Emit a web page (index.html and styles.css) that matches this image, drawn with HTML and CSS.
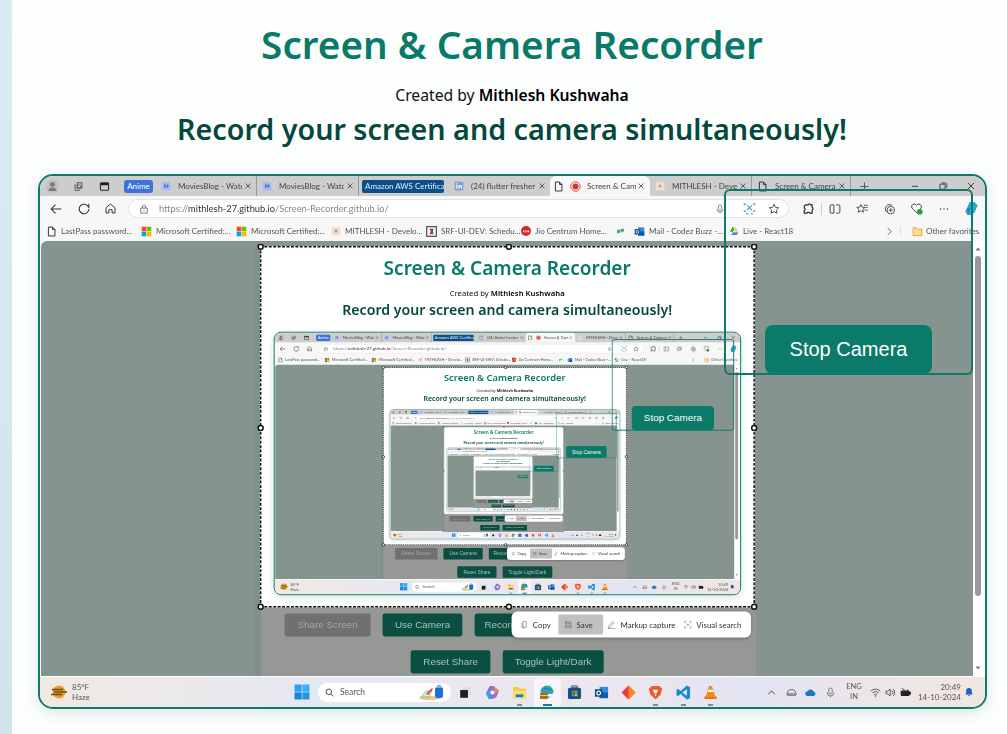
FILE: index.html
```html
<!DOCTYPE html>
<html lang="en">
<head>
<meta charset="utf-8">
<title>Screen &amp; Camera Recorder</title>
<link rel="stylesheet" href="styles.css">
</head>
<body>
<svg class="sprite" aria-hidden="true">
  <symbol id="person" viewBox="0 0 16 16"><circle cx="8" cy="8" r="8" fill="#c2c0bd"/><circle cx="8" cy="5.6" r="3" fill="#7d7b78"/><path d="M2.8 13.5c.4-3 2.4-4.2 5.2-4.2s4.800 1.200 5.200 4.200z" fill="#7d7b78"/></symbol>
  <symbol id="spaces" viewBox="0 0 16 16"><path d="M6 2.500h7v8H6zM3 5v8.500h7" fill="none" stroke="#444" stroke-width="1.300"/><circle cx="9" cy="8" r="2.400" fill="none" stroke="#444"/></symbol>
  <symbol id="tabs" viewBox="0 0 16 16"><rect x="2" y="2.500" width="12" height="11" rx="1.500" fill="none" stroke="#222" stroke-width="1.500"/><path d="M2 3h12v3H2z" fill="#222"/></symbol>
  <symbol id="play" viewBox="0 0 16 16"><rect x="1" y="1" width="14" height="14" rx="2" fill="#a9bde9"/><path d="M5 4l4 4-4 4zM9 4l4 4-4 4z" fill="#4c78cf"/></symbol>
  <symbol id="x" viewBox="0 0 16 16"><path d="M3 3l10 10M13 3L3 13" stroke="#333" stroke-width="1.500" fill="none"/></symbol>
  <symbol id="in" viewBox="0 0 16 16"><rect x="1" y="1" width="14" height="14" rx="1.500" fill="#7ea3cf"/><path d="M3.500 6.500h2v6h-2zM3.500 3.500h2v2h-2zM7 6.500h2v1c1.500-1.800 4-1 4 1.500v3.500h-2v-3c0-1.600-2-1.600-2 0v3H7z" fill="#eef3f9"/></symbol>
  <symbol id="doc" viewBox="0 0 16 16"><path d="M3.500 1.500h6l3.500 3.500v9.500h-9.500zM9.500 1.500V5H13" fill="none" stroke="#222" stroke-width="1.300"/></symbol>
  <symbol id="rec" viewBox="0 0 16 16"><circle cx="8" cy="8" r="6.800" fill="none" stroke="#d8332b" stroke-width="1.300"/><circle cx="8" cy="8" r="4.400" fill="#d8332b"/></symbol>
  <symbol id="dev" viewBox="0 0 16 16"><rect x="1" y="1" width="14" height="14" rx="2" fill="#ece0d4"/><path d="M5 8l3-3 3 3-3 3zM8 6.500l1.500 1.500L8 9.500z" fill="#d79a64"/></symbol>
  <symbol id="plus" viewBox="0 0 16 16"><path d="M8 2v12M2 8h12" stroke="#444" stroke-width="1.200"/></symbol>
  <symbol id="min" viewBox="0 0 16 16"><path d="M3 8.500h10" stroke="#222" stroke-width="1.300"/></symbol>
  <symbol id="max" viewBox="0 0 16 16"><rect x="3" y="5" width="8.500" height="8" rx="1.500" fill="none" stroke="#222" stroke-width="1.300"/><path d="M5.500 3h6A2.500 2.500 0 0 1 14 5.500V11" fill="none" stroke="#222" stroke-width="1.100"/></symbol>
  <symbol id="back" viewBox="0 0 16 16"><path d="M14 8H2.500M7.500 3l-5 5 5 5" fill="none" stroke="#333" stroke-width="1.200"/></symbol>
  <symbol id="reload" viewBox="0 0 16 16"><path d="M13.500 8a5.500 5.500 0 1 1-1.600-3.900L13.500 6V2" fill="none" stroke="#333" stroke-width="1.200"/></symbol>
  <symbol id="home" viewBox="0 0 16 16"><path d="M2.500 7L8 2.500 13.500 7v6.500h-3.500v-4H6v4H2.500z" fill="none" stroke="#333" stroke-width="1.200"/></symbol>
  <symbol id="lock" viewBox="0 0 16 16"><rect x="3" y="6.500" width="10" height="8" fill="none" stroke="#555" stroke-width="1.200"/><path d="M5.500 6.500V4.500a2.500 2.500 0 0 1 5 0v2M8 9.500v2" fill="none" stroke="#555" stroke-width="1.200"/></symbol>
  <symbol id="mic" viewBox="0 0 16 16"><rect x="5.500" y="1.500" width="5" height="8.500" rx="2.500" fill="none" stroke="#666" stroke-width="1.200"/><path d="M3 8a5 5 0 0 0 10 0M8 13v2" fill="none" stroke="#666" stroke-width="1.200"/></symbol>
  <symbol id="cast" viewBox="0 0 16 16"><path d="M1.500 4V2.500H4M12 2.500h2.500V4M1.500 10v1.500H4M12 11.500h2.500V10" fill="none" stroke="#3c8fd8" stroke-width="1.300"/><path d="M5 4l6 6M11 4l-6 6M3.500 14.500h3M9.500 14.500h3" stroke="#3c8fd8" stroke-width="1.300"/></symbol>
  <symbol id="star" viewBox="0 0 16 16"><path d="M8 1.800l1.900 4 4.400.5-3.200 3 .9 4.400L8 11.500l-4 2.200.9-4.400-3.200-3 4.400-.5z" fill="none" stroke="#333" stroke-width="1.100"/></symbol>
  <symbol id="ext" viewBox="0 0 16 16"><path d="M5 2.500h3c.5-1.500 3-1.500 3.500 0h2v3c1.500.5 1.500 3.500 0 4v4h-3c-.5-1.500-3.500-1.500-4 0h-3.500v-3.500c1.500-.5 1.500-3 0-3.500V4z" fill="none" stroke="#222" stroke-width="1.500"/></symbol>
  <symbol id="split" viewBox="0 0 16 16"><path d="M6.500 2.500H3a1.500 1.500 0 0 0-1.500 1.500v8A1.500 1.500 0 0 0 3 13.500h3.500zM9.500 2.500H13A1.500 1.500 0 0 1 14.500 4v8a1.500 1.500 0 0 1-1.500 1.500H9.500" fill="none" stroke="#333" stroke-width="1.200"/></symbol>
  <symbol id="fav" viewBox="0 0 16 16"><path d="M6.500 2l1.600 3.500 3.900.4-2.900 2.600.8 3.800-3.400-1.900-3.400 1.900.8-3.800L1 5.900l3.900-.4zM10.500 3h5M12.500 6h3M11.500 9.500h4" fill="none" stroke="#333" stroke-width="1.100"/></symbol>
  <symbol id="coll" viewBox="0 0 16 16"><path d="M3.500 12A6 6 0 0 1 5 2.500h6" fill="none" stroke="#333" stroke-width="1.100"/><circle cx="9" cy="9.500" r="5" fill="none" stroke="#333" stroke-width="1.100"/><path d="M9 7v5M6.500 9.500h5" stroke="#333" stroke-width="1.100"/></symbol>
  <symbol id="health" viewBox="0 0 16 16"><path d="M8 13L2.500 7.500a3 3 0 0 1 5.500-3.500 3 3 0 0 1 5.500 3.500z" fill="none" stroke="#333" stroke-width="1.100"/><circle cx="12" cy="12" r="3.500" fill="#2f9a46"/></symbol>
  <symbol id="dots" viewBox="0 0 16 16"><circle cx="3.500" cy="8" r=".9" fill="#333"/><circle cx="8" cy="8" r=".9" fill="#333"/><circle cx="12.500" cy="8" r=".9" fill="#333"/></symbol>
  <symbol id="copilot" viewBox="0 0 16 16"><path d="M6 1h5l3.500 3.500-3 7.500-3.500 3H3.500L1.500 11z" fill="#2f9fdc"/><path d="M8 4l5 0-3 8-4 0z" fill="#1fb8a6"/><path d="M3 8l3-1-1 6z" fill="#2b6fd4"/></symbol>
  <symbol id="ms" viewBox="0 0 16 16"><path d="M1 1h6.700v6.700H1z" fill="#f25022"/><path d="M8.300 1H15v6.700H8.300z" fill="#7fba00"/><path d="M1 8.300h6.700V15H1z" fill="#00a4ef"/><path d="M8.300 8.300H15V15H8.300z" fill="#ffb900"/></symbol>
  <symbol id="srf" viewBox="0 0 16 16"><rect x="1" y="1" width="14" height="14" fill="none" stroke="#333" stroke-width="1.500"/><path d="M5 4h6l-1 4 1 4H5l2-4z" fill="#8c3f72"/></symbol>
  <symbol id="jio" viewBox="0 0 16 16"><circle cx="8" cy="8" r="8" fill="#d3282b"/><path d="M3.500 7h2v3H3.500zM7 6.500h1.500v4H7zM10 7h3v3h-3z" fill="#fff"/></symbol>
  <symbol id="chat" viewBox="0 0 16 16"><path d="M2 5h6v5H5l-3 2zM9 3h5v5h-2v2l-3-2z" fill="#3aa37a"/></symbol>
  <symbol id="outlook" viewBox="0 0 16 16"><path d="M6 2h9v12H6z" fill="#2e8fd8"/><path d="M6 8h9v6H6z" fill="#0f5fa8"/><rect x="1" y="4.500" width="8" height="8" fill="#0a4e96"/><circle cx="5" cy="8.500" r="2" fill="none" stroke="#fff" stroke-width="1.200"/></symbol>
  <symbol id="drive" viewBox="0 0 16 16"><path d="M5.500 1.500h5L6.500 9H1.500z" fill="#1fa463"/><path d="M10.500 1.500L15 9h-5L6 1.500z" fill="#ffd04b"/><path d="M3.500 14.500L6 10h9l-2.500 4.500z" fill="#4688f4"/></symbol>
  <symbol id="chev" viewBox="0 0 16 16"><path d="M5 2l6 6-6 6" fill="none" stroke="#333" stroke-width="1.300"/></symbol>
  <symbol id="folder" viewBox="0 0 16 16"><path d="M1.500 2.500H6L7.500 4.500h7v9.500h-13z" fill="#f7dd8b" stroke="#c69c2c"/></symbol>
  <symbol id="up" viewBox="0 0 16 16"><path d="M3 11l5-6 5 6z" fill="#777"/></symbol>
  <symbol id="down" viewBox="0 0 16 16"><path d="M3 5l5 6 5-6z" fill="#777"/></symbol>
  <symbol id="caret" viewBox="0 0 16 16"><path d="M2.500 11L8 5l5.500 6" fill="none" stroke="#333" stroke-width="1.500"/></symbol>
  <symbol id="haze" viewBox="0 0 16 16"><circle cx="8" cy="8" r="6.500" fill="#e8a02b"/><path d="M1 5.500h11M3 8h13M0 10.500h11" stroke="#6e4a1a" stroke-width="1.300"/></symbol>
  <symbol id="win" viewBox="0 0 16 16"><path d="M.5.500h7.200v7.200H.5z" fill="#2fa3ea"/><path d="M8.300.500h7.200v7.200H8.300z" fill="#38b2f0"/><path d="M.5 8.300h7.200v7.200H.5z" fill="#1a86d8"/><path d="M8.300 8.300h7.200v7.200H8.300z" fill="#2597e2"/></symbol>
  <symbol id="search" viewBox="0 0 16 16"><circle cx="6.800" cy="6.800" r="5" fill="none" stroke="#222" stroke-width="1.400"/><path d="M10.500 10.500L15 15" stroke="#222" stroke-width="1.400"/></symbol>
  <symbol id="promo" viewBox="0 0 28 16"><ellipse cx="11" cy="14" rx="11" ry="2" fill="#e7c78f"/><path d="M2 13l5-6h6l-3 6z" fill="#dfeadb" stroke="#7a9a5a" stroke-width=".6"/><path d="M7 10l6-6 1 1-5 6z" fill="#c74f3c"/><rect x="16" y="3" width="8" height="11" rx="2.500" fill="#1b6fd0"/><rect x="18" y="1" width="4" height="3" fill="#7db4e8"/></symbol>
  <symbol id="tview" viewBox="0 0 16 16"><rect x="5" y="1.500" width="9.500" height="9.500" fill="#dcdcdc"/><rect x="1.500" y="5" width="9.500" height="9.500" fill="#1e1e1e"/></symbol>
  <symbol id="cop2" viewBox="0 0 16 16"><path d="M5 1h4L15 6l-3 7-4 2H4L1 9z" fill="#8e6ce0"/><path d="M9 1l6 5-4 3z" fill="#f08a3c"/><path d="M1 9l5-4 2 10H4z" fill="#3aa0e8"/><path d="M11 9l-3 6 4-2z" fill="#e85aa8"/><circle cx="8" cy="8" r="2.200" fill="#fff"/></symbol>
  <symbol id="expl" viewBox="0 0 16 16"><path d="M1 2h5.500L8 4h7v10H1z" fill="#f5c73f"/><path d="M1 6h14v8H1z" fill="#fbdc6e"/><rect x="4" y="10" width="8" height="3" fill="#1a78c2"/></symbol>
  <symbol id="edge" viewBox="0 0 16 16"><path d="M1.500 8a6.500 6.500 0 0 1 13 0c0 1.500-1.500 2-3 2H7c0 2 2 3.500 5.500 2.500A7 7 0 0 1 1.500 8z" fill="#2ba8a0"/><path d="M2 6.500C3.500 3 12 2.500 14.500 8 12 5.500 5 4.500 2 6.500z" fill="#2c7cd6"/><rect x="1" y="9" width="8" height="6" rx="1" fill="#b06a22"/><rect x="1" y="11" width="8" height="1" fill="#e8c37a"/></symbol>
  <symbol id="store" viewBox="0 0 16 16"><rect x="1" y="3" width="14" height="12" rx="2" fill="#1b4f87"/><path d="M5 1h6v2H5z" fill="none" stroke="#1b4f87"/><path d="M5 6h2.800v2.800H5z" fill="#f25022"/><path d="M8.200 6H11v2.800H8.200z" fill="#7fba00"/><path d="M5 9.200h2.800V12H5z" fill="#00a4ef"/><path d="M8.200 9.200H11V12H8.200z" fill="#ffb900"/></symbol>
  <symbol id="diamond" viewBox="0 0 16 16"><path d="M8 .5L15.500 8 8 15.500.5 8z" fill="#f2383f"/><path d="M8 .5L15.500 8 8 15.500z" fill="#f9862b"/></symbol>
  <symbol id="brave" viewBox="0 0 16 16"><path d="M4 1h8l3 3-1.500 6L8 15.500 2.500 10 1 4z" fill="#f1592a"/><path d="M5 5h6L9 9H7zM7 10h2l-1 2.500z" fill="#fff"/></symbol>
  <symbol id="vscode" viewBox="0 0 16 16"><path d="M11.500.5L15 2v12l-3.500 1.500L5 9.500 2 12 .5 11V5L2 4l3 2.500z" fill="#1f8ad2"/><path d="M11.500 4.500v7L7 8z" fill="#e8f3fb"/></symbol>
  <symbol id="vlc" viewBox="0 0 16 16"><path d="M6.500 1h3l3.500 11H3z" fill="#f28c18"/><path d="M5.700 5h4.600l.7 2.500H5z" fill="#fff"/><rect x="1.500" y="12" width="13" height="3" rx="1" fill="#e07a10"/></symbol>
  <symbol id="cup" viewBox="0 0 16 16"><path d="M2 9a6 5 0 0 1 12 0M1 10h14l-1 2H2z" fill="none" stroke="#555" stroke-width="1.300"/></symbol>
  <symbol id="cloud" viewBox="0 0 16 16"><path d="M4 13a3.500 3.500 0 0 1-.4-7A5 5 0 0 1 12.500 6.500 3.300 3.300 0 0 1 12.500 13z" fill="#1a78c8"/></symbol>
  <symbol id="wifi" viewBox="0 0 16 16"><path d="M1 6a10 10 0 0 1 14 0M3.500 8.500a6.500 6.500 0 0 1 9 0M6 11a3 3 0 0 1 4 0" fill="none" stroke="#333" stroke-width="1.100"/><circle cx="8" cy="13" r="1" fill="#333"/></symbol>
  <symbol id="vol" viewBox="0 0 16 16"><path d="M1.500 6h2.500l3.500-3v10L4 10H1.500z" fill="none" stroke="#333" stroke-width="1.100"/><path d="M10 5a4 4 0 0 1 0 6M12 3a7 7 0 0 1 0 10" fill="none" stroke="#333" stroke-width="1.100"/></symbol>
  <symbol id="batt" viewBox="0 0 16 16"><rect x="1" y="5" width="13" height="8" rx="1.500" fill="#222"/><path d="M14 7.500h1.500v3H14zM3 2l4 3M10 4l2 1" stroke="#222" stroke-width="1.200"/></symbol>
  <symbol id="bell" viewBox="0 0 16 16"><path d="M8 1.500a4.500 4.500 0 0 1 4.500 4.500v3.500l1.500 2.500H2l1.500-2.500V6A4.500 4.500 0 0 1 8 1.500zM6.200 13h3.600a1.800 1.800 0 0 1-3.600 0z" fill="#1a5fc0"/></symbol>
  <symbol id="copy" viewBox="0 0 16 16"><path d="M5 1.500h7v11.500H5zM3 4v10.500h7" fill="none" stroke="#555" stroke-width="1"/></symbol>
  <symbol id="save" viewBox="0 0 16 16"><path d="M2 2h9.500L14 4.500V14H2zM5 2v4h6V2M4.500 14V9.500h7V14" fill="none" stroke="#555" stroke-width="1"/></symbol>
  <symbol id="pen" viewBox="0 0 16 16"><path d="M2 11L10 2.500l2.500 2.500L5 13H2zM1 15h14" fill="none" stroke="#555" stroke-width="1"/></symbol>
  <symbol id="visual" viewBox="0 0 16 16"><path d="M1.500 5V1.500H5M11 1.500h3.500V5M1.500 11v3.500H5M11 14.500h3.500V11" fill="none" stroke="#555"/><path d="M5.500 5.500l5 5M10.500 5.500l-5 5" stroke="#555"/></symbol>
</svg>

<div class="page root">
  <div class="strip"></div>
  <div class="dim"></div>
  <div class="sel">
    <span class="h h-tl"></span><span class="h h-tc"></span><span class="h h-tr"></span>
    <span class="h h-ml"></span><span class="h h-mr"></span>
    <span class="h h-bl"></span><span class="h h-bc"></span><span class="h h-br"></span>
  </div>

  <div class="fold">
    <header class="head">
      <h1 class="title">Screen &amp; Camera Recorder</h1>
      <p class="credit">Created by <strong>Mithlesh Kushwaha</strong></p>
      <h2 class="tagline">Record your screen and camera simultaneously!</h2>
    </header>

    <section class="frame">
      <div class="tabstrip">
        <span class="box-26 box-first"><svg class="i13"><use href="#person"/></svg></span>
        <span class="box-26"><svg class="i11"><use href="#spaces"/></svg></span>
        <span class="box-26"><svg class="i11"><use href="#tabs"/></svg></span>
        <span class="pill-anime">Anime</span>
        <div class="tab"><svg class="i10"><use href="#play"/></svg><span class="tab-text">MoviesBlog - Watch</span><svg class="i8"><use href="#x"/></svg></div>
        <div class="tab tab-short"><svg class="i10"><use href="#play"/></svg><span class="tab-text">MoviesBlog - Watch</span><svg class="i8"><use href="#x"/></svg></div>
        <span class="pill-aws">Amazon AWS Certificat</span>
        <div class="tab tab-plain"><svg class="i10"><use href="#in"/></svg><span class="tab-text">(24) flutter fresher J</span><svg class="i8"><use href="#x"/></svg></div>
        <div class="tab tab-active"><svg class="i11"><use href="#doc"/></svg><svg class="i11"><use href="#rec"/></svg><span class="tab-text">Screen &amp; Cam</span><svg class="i8"><use href="#x"/></svg></div>
        <div class="tab tab-plain"><svg class="i10"><use href="#dev"/></svg><span class="tab-text">MITHLESH - Devel</span><svg class="i8"><use href="#x"/></svg></div>
        <div class="tab tab-last"><svg class="i11"><use href="#doc"/></svg><span class="tab-text">Screen &amp; Camera R</span><svg class="i8"><use href="#x"/></svg></div>
        <span class="box-26"><svg class="i11"><use href="#plus"/></svg></span>
        <span class="winctl">
          <span class="box-28"><svg class="i10"><use href="#min"/></svg></span>
          <span class="box-28"><svg class="i10"><use href="#max"/></svg></span>
          <span class="box-28"><svg class="i10"><use href="#x"/></svg></span>
        </span>
      </div>

      <div class="toolbar">
        <span class="nav-btn"><svg class="i14"><use href="#back"/></svg></span>
        <span class="nav-btn"><svg class="i14"><use href="#reload"/></svg></span>
        <span class="nav-btn"><svg class="i13"><use href="#home"/></svg></span>
        <div class="url">
          <svg class="i10"><use href="#lock"/></svg>
          <span class="url-text">https://<b>mithlesh-27.github.io</b>/Screen-Recorder.github.io/</span>
          <span class="url-tools">
            <svg class="i10"><use href="#mic"/></svg>
            <svg class="i13"><use href="#cast"/></svg>
            <svg class="i12"><use href="#star"/></svg>
          </span>
        </div>
        <span class="tool"><svg class="i12"><use href="#ext"/></svg></span>
        <span class="tool tool-sep"><svg class="i12"><use href="#split"/></svg></span>
        <span class="tool"><svg class="i12"><use href="#fav"/></svg></span>
        <span class="tool"><svg class="i12"><use href="#coll"/></svg></span>
        <span class="tool"><svg class="i13"><use href="#health"/></svg></span>
        <span class="tool"><svg class="i12"><use href="#dots"/></svg></span>
        <span class="tool"><svg class="i15"><use href="#copilot"/></svg></span>
      </div>

      <div class="bookmarks">
        <span class="bm"><svg class="i11"><use href="#doc"/></svg>LastPass password...</span>
        <span class="bm"><svg class="i11"><use href="#ms"/></svg>Microsoft Certified:...</span>
        <span class="bm"><svg class="i11"><use href="#ms"/></svg>Microsoft Certified:...</span>
        <span class="bm"><svg class="i10"><use href="#dev"/></svg>MITHLESH - Develo...</span>
        <span class="bm"><svg class="i11"><use href="#srf"/></svg>SRF-UI-DEV: Schedu...</span>
        <span class="bm"><svg class="i10"><use href="#jio"/></svg>Jio Centrum Home...</span>
        <span class="bm bm-icon"><svg class="i9"><use href="#chat"/></svg></span>
        <span class="bm"><svg class="i11"><use href="#outlook"/></svg>Mail - Codez Buzz -...</span>
        <span class="bm bm-fill"><svg class="i10"><use href="#drive"/></svg>Live - React18</span>
        <span class="bm-more"><svg class="i9"><use href="#chev"/></svg></span>
        <span class="bm-other"><svg class="i11"><use href="#folder"/></svg>Other favorites</span>
      </div>

      <div class="content">
        <div class="viewport"></div>
        <div class="scrollbar">
          <svg class="i8"><use href="#up"/></svg>
          <span class="thumb"></span>
          <svg class="i8 arrow-end"><use href="#down"/></svg>
        </div>
      </div>

      <div class="taskbar">
        <div class="weather">
          <svg class="i16"><use href="#haze"/></svg>
          <span class="weather-text"><span>85°F</span><span>Haze</span></span>
        </div>
        <svg class="i16"><use href="#win"/></svg>
        <div class="search">
          <svg class="i9"><use href="#search"/></svg>
          <span class="search-text">Search</span>
          <svg class="promo"><use href="#promo"/></svg>
        </div>
        <div class="apps">
          <span class="app"><svg class="i13"><use href="#tview"/></svg></span>
          <span class="app"><svg class="i15"><use href="#cop2"/></svg></span>
          <span class="app"><svg class="i15"><use href="#expl"/></svg><i class="dot"></i></span>
          <span class="app app-on"><svg class="i16"><use href="#edge"/></svg><i class="dot"></i></span>
          <span class="app"><svg class="i15"><use href="#store"/></svg></span>
          <span class="app"><svg class="i15"><use href="#outlook"/></svg></span>
          <span class="app"><svg class="i15"><use href="#diamond"/></svg></span>
          <span class="app"><svg class="i15"><use href="#brave"/></svg><i class="dot"></i></span>
          <span class="app"><svg class="i15"><use href="#vscode"/></svg><i class="dot"></i></span>
          <span class="app"><svg class="i15"><use href="#vlc"/></svg><i class="dot"></i></span>
        </div>
        <div class="tray">
          <span class="tr-20"><svg class="i9"><use href="#caret"/></svg></span>
          <span class="tr-20"><svg class="i11"><use href="#cup"/></svg></span>
          <span class="tr-20"><svg class="i11"><use href="#cloud"/></svg></span>
          <span class="tr-20"><svg class="i11"><use href="#mic"/></svg></span>
          <span class="lang"><span>ENG</span><span>IN</span></span>
          <span class="tr-16"><svg class="i11"><use href="#wifi"/></svg></span>
          <span class="tr-16"><svg class="i11"><use href="#vol"/></svg></span>
          <span class="tr-16"><svg class="i11"><use href="#batt"/></svg></span>
          <span class="clock"><span>20:49</span><span>14-10-2024</span></span>
          <span class="tr-16"><svg class="i10"><use href="#bell"/></svg></span>
        </div>
      </div>
    </section>

    <aside class="camera">
      <button class="stop" type="button">Stop Camera</button>
    </aside>
  </div>

  <div class="below">
    <div class="row row-top">
      <button class="btn btn-share" type="button">Share Screen</button>
      <button class="btn btn-use" type="button">Use Camera</button>
      <button class="btn" type="button">Record Screen</button>
    </div>
    <div class="row">
      <button class="btn btn-use" type="button">Reset Share</button>
      <button class="btn btn-toggle" type="button">Toggle Light/Dark</button>
    </div>
    <div class="capture">
      <span class="cap cap-copy"><svg class="i16"><use href="#copy"/></svg>Copy</span>
      <span class="cap cap-save"><svg class="i16"><use href="#save"/></svg>Save</span>
      <span class="cap cap-mark"><svg class="i18"><use href="#pen"/></svg>Markup capture</span>
      <span class="cap cap-vis"><svg class="i16"><use href="#visual"/></svg>Visual search</span>
    </div>
  </div>
</div>
<script src="script.js"></script>
</body>
</html>
```

FILE: styles.css
```css
* { box-sizing: border-box; }
html, body { margin: 0; padding: 0; overflow: hidden; background: #fcfefe; }
.sprite { display: none; }
svg { display: block; flex: none; }
.i8 { width: 8px; height: 8px; }
.i9 { width: 9px; height: 9px; }
.i10 { width: 10px; height: 10px; }
.i11 { width: 11px; height: 11px; }
.i12 { width: 12px; height: 12px; }
.i13 { width: 13px; height: 13px; }
.i14 { width: 14px; height: 14px; }
.i15 { width: 15px; height: 15px; }
.i16 { width: 16px; height: 16px; }
.i18 { width: 18px; height: 18px; }

/* a page: the real one, and the copies of it seen inside the shared screen */
.page { position: relative; width: 1007px; font-family: "Noto Sans", sans-serif; }
.root { height: 734px; overflow: hidden; background: #fcfefe; }
.nested { position: absolute; left: 214.3px; top: 5.3px; transform: scale(.4925); transform-origin: 0 0; }

.strip { position: absolute; left: 0; top: 0; width: 12px; height: 734px; background: linear-gradient(180deg, #d9edf0, #cfe5e8); }
.dim, .sel { display: none; }

.nested .strip { background: #7f8f8d; height: 960px; }
.nested .dim { display: block; position: absolute; left: 12px; top: 734px; width: 1005px; height: 240px; background: #959895; }
.nested .sel { display: block; position: absolute; left: 10px; top: 0; width: 1005px; height: 734px; background: #fff; border: 3px dashed #111; }

.h { position: absolute; width: 13px; height: 13px; border-radius: 50%; background: #fff; border: 3px solid #111; }
.h-tl, .h-ml, .h-bl { left: -8px; }
.h-tc, .h-bc { left: 496px; }
.h-tr, .h-mr, .h-br { right: -8px; }
.h-tl, .h-tc, .h-tr { top: -8px; }
.h-ml, .h-mr { top: 360px; }
.h-bl, .h-bc, .h-br { bottom: -8px; }

.fold { position: relative; height: 734px; padding-left: 17px; }
.head { height: 174px; padding-top: 17px; text-align: center; }
.title { margin: 0; font-size: 38.700px; line-height: 54px; font-weight: 600; color: #0a7a68; }
.credit { margin: 12px 0 0; font-size: 15.700px; line-height: 24px; color: #111; }
.credit strong { font-weight: 600; color: #000; }
.tagline { margin: 3px 0 0; font-size: 28.700px; line-height: 38px; font-weight: 600; color: #06483d; }

/* the shared screen */
.frame { display: flex; flex-direction: column; width: 949px; height: 535px; margin-left: 21px; border: 2px solid #0f7a6a; border-radius: 15px; overflow: hidden; background: #f7f7f7; box-shadow: 0 4px 14px rgba(15, 90, 80, .14); font-family: Lato, sans-serif; }
.root > .fold > .frame { filter: blur(.3px); }

.tabstrip { display: flex; align-items: center; height: 20px; flex: none; background: #cdcdcd; font-size: 8px; color: #444; }
.box-26 { display: flex; align-items: center; justify-content: center; width: 26px; height: 20px; flex: none; }
.box-first { margin-left: -1px; }
.box-28 { display: flex; align-items: center; justify-content: center; width: 28px; height: 20px; }
.pill-anime { flex: none; width: 29px; height: 13px; margin: 0 2px 0 7px; border-radius: 3px; background: #3a74d8; color: #fff; line-height: 13px; text-align: center; }
.tab { display: flex; align-items: center; gap: 7px; flex: none; width: 102px; height: 20px; padding: 0 4px 0 6px; border-right: 1px solid #999; }
.tab-short { width: 102px; padding-left: 5px; }
.tab-plain { width: 101px; padding-left: 5px; border-right: 0; }
.tab-last { width: 100px; border-left: 1px solid #999; border-right: 1px solid #999; padding-left: 5px; }
.tab-text { flex: 1; min-width: 0; margin-right: -5px; overflow: hidden; white-space: nowrap; }
.tab-active { width: 100px; height: 20px; padding: 0 5px 0 3px; gap: 6px; background: #f7f7f7; border: 0; border-radius: 6px 6px 0 0; }
.pill-aws { flex: none; width: 82px; height: 13px; margin: 0 5px 0 3px; padding-left: 3px; border-radius: 2px; background: #0b4f8a; color: #e8f0f8; line-height: 13px; overflow: hidden; white-space: nowrap; }
.winctl { display: flex; margin-left: auto; }

.toolbar { display: flex; align-items: center; height: 25px; flex: none; padding-left: 2px; background: #f7f7f7; }
.nav-btn { display: flex; align-items: center; justify-content: center; width: 28px; flex: none; }
.nav-btn + .nav-btn + .nav-btn { width: 25px; }
.url { display: flex; align-items: center; gap: 10px; width: 661px; height: 19px; flex: none; margin: 0 5px; padding: 0 8px 0 10px; border: 1px solid #e3e3e3; border-radius: 10px; background: #fff; font-size: 9.300px; color: #888; }
.url-text { white-space: nowrap; }
.url-text b { font-weight: 400; color: #333; }
.url-tools { display: flex; align-items: center; gap: 12.500px; margin-left: auto; }
.url-tools svg:first-child { margin-right: 5px; }
.tool { display: flex; align-items: center; justify-content: center; width: 27.330px; flex: none; }
.tool-sep { border-left: 1px solid #ccc; }

.bookmarks { display: flex; align-items: center; height: 20px; flex: none; padding-left: 6px; background: #f7f7f7; font-size: 8px; color: #555; }
.bm { display: flex; align-items: center; gap: 4px; width: 95px; flex: none; white-space: nowrap; overflow: hidden; }
.bm-icon { width: 18px; }
.bm-fill { width: 150px; }
.bm-more { display: flex; justify-content: center; width: 22px; flex: none; border-right: 1px solid #ddd; }
.bm-other { display: flex; align-items: center; gap: 3px; flex: none; margin-left: 11px; white-space: nowrap; }

.content { display: flex; flex: 1; min-height: 0; padding-left: 1px; background: #f7f7f7; }
.viewport { position: relative; flex: 1; overflow: hidden; border-radius: 6px 0 0 0; background: #85948f; }
.scrollbar { display: flex; flex-direction: column; align-items: center; width: 12px; flex: none; padding: 4px 2px 4px 0; background: #fff; }
.thumb { width: 6px; height: 340px; flex: none; margin-top: 3px; border-radius: 3px; background: #999; }
.arrow-end { margin-top: auto; }

.taskbar { display: flex; align-items: center; height: 31px; flex: none; border-top: 1px solid #fff; background: linear-gradient(95deg, #f0e9e3, #e6e8f2 30%, #ece6ee 60%, #e3e4f2 75%, #f2e7df); font-size: 8px; color: #555; }
.weather { display: flex; align-items: center; gap: 5px; width: 254px; flex: none; padding-left: 11px; }
.weather-text { display: flex; flex-direction: column; line-height: 10px; }
.search { display: flex; align-items: center; gap: 6px; width: 133px; height: 19px; flex: none; margin-left: 8px; padding: 0 4px 0 7px; border-radius: 10px; background: #fff; font-size: 8.500px; color: #555; }
.promo { width: 28px; height: 16px; margin-left: auto; }
.apps { display: flex; flex: none; margin-left: 1px; }
.app { position: relative; display: flex; align-items: center; justify-content: center; width: 27.200px; height: 29px; }
.app-on { background: rgba(255, 255, 255, .6); border-radius: 3px; }
.dot { position: absolute; left: 11px; bottom: 1px; width: 5px; height: 1.500px; background: #8a8a8a; }
.app-on .dot { left: 9px; width: 9px; background: #1a6fc0; }
.tray { display: flex; align-items: center; margin-left: auto; padding-right: 9px; }
.tr-20 { display: flex; justify-content: center; width: 19.500px; }
.tr-16 { display: flex; justify-content: center; width: 15px; }
.lang { display: flex; flex-direction: column; align-items: center; width: 28px; line-height: 10px; font-size: 7.500px; }
.clock { display: flex; flex-direction: column; align-items: flex-end; width: 48px; line-height: 10px; }

/* the camera preview sits over the shared screen */
.camera { position: absolute; left: 724px; top: 189px; display: flex; flex-direction: column; align-items: center; justify-content: flex-end; width: 249px; height: 186px; border: 2px solid #0f7a6a; border-radius: 6px; }
.stop { width: 167px; height: 49px; margin-bottom: -1px; border: 0; border-radius: 8px; background: #0b7a68; color: #fff; font: 20px "Liberation Sans", Arial, sans-serif; }

/* the buttons, below the fold and dimmed by the capture overlay */
.below { position: relative; height: 226px; padding-top: 12px; font-family: "Liberation Sans", Arial, sans-serif; }
.row { display: flex; justify-content: center; gap: 24.400px; height: 47px; margin-bottom: 28px; padding-left: 17px; }
.row-top { justify-content: flex-start; padding-left: 60px; }
.btn { height: 47px; padding: 0 20px; border: 0; border-radius: 5px; background: #0b4f43; color: #a8c0ba; font: 20px "Liberation Sans", Arial, sans-serif; white-space: nowrap; }
.btn-share { width: 175px; background: #707070; color: #a5a5a5; }
.btn-use { width: 162px; }
.btn-toggle { width: 205px; }
.capture { position: absolute; left: 521px; top: 8px; display: flex; align-items: center; width: 486px; height: 53px; border-radius: 12px; background: #fff; box-shadow: 0 2px 8px rgba(0, 0, 0, .22); font: 16px Lato, sans-serif; color: #333; }
.cap { display: flex; align-items: center; gap: 9px; height: 41px; white-space: nowrap; }
.cap-copy { width: 95px; padding-left: 18px; }
.cap-save { width: 91px; padding-left: 12px; background: #c0c0c0; border-radius: 3px; }
.cap-mark { width: 160px; padding-left: 8px; }
.cap-vis { padding-left: 4px; }
```

FILE: script.js
```js
// The page shares its own screen, so each frame shows a smaller copy of the page.
const DEPTH = 4;
const root = document.querySelector('.page');
const blank = root.cloneNode(true);
let host = root;
for (let level = 0; level < DEPTH; level++) {
  const copy = blank.cloneNode(true);
  copy.classList.replace('root', 'nested');
  host.querySelector('.viewport').appendChild(copy);
  host = copy;
}
```
